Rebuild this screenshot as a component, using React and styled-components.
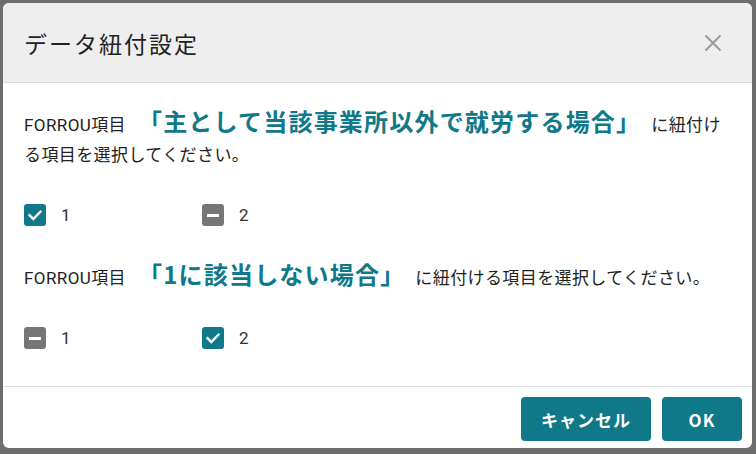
import React from 'react';
import styled, {createGlobalStyle} from "styled-components";

const GlobalStyle = createGlobalStyle`
    html, body {
        margin: 0;
        padding: 0;
        background: #6d6d6d;
        font-family: "Roboto", "Noto Sans CJK JP", sans-serif;
    }
`

const teal = '#0f7889';

const groups = [
    {title: '「主として当該事業所以外で就労する場合」', checked: [true, false]},
    {title: '「1に該当しない場合」', checked: [false, true]},
];

const CheckIcon = () => (
    <svg width="16" height="16" viewBox="0 0 16 16">
        <path d="M2.5 8.2 L6.3 12 L13.5 4.6" fill="none" stroke="#fff" strokeWidth="2.4"
              strokeLinecap="square"/>
    </svg>
);

const CloseIcon = () => (
    <svg width="18" height="18" viewBox="0 0 18 18">
        <path d="M1.5 1.5 L16.5 16.5 M16.5 1.5 L1.5 16.5" stroke="#9b9b9b" strokeWidth="2"/>
    </svg>
);

export default function App() {
    return (
        <>
            <GlobalStyle/>
            <Dialog>
                <Header>
                    <Title>データ紐付設定</Title>
                    <CloseButton><CloseIcon/></CloseButton>
                </Header>
                <Body>
                    {groups.map((g, i) => (
                        <Group key={i}>
                            <Lead>
                                FORROU項目<Highlight>{g.title}</Highlight>に紐付ける項目を選択してください。
                            </Lead>
                            <Options>
                                {g.checked.map((c, j) => (
                                    <Option key={j}>
                                        <Box $checked={c}>{c ? <CheckIcon/> : <Dash/>}</Box>
                                        <OptionLabel>{j + 1}</OptionLabel>
                                    </Option>
                                ))}
                            </Options>
                        </Group>
                    ))}
                </Body>
                <Footer>
                    <Button $w={130}>キャンセル</Button>
                    <Button $w={80}>OK</Button>
                </Footer>
            </Dialog>
        </>
    );
}

const Dialog = styled.div`
    margin: 3px 0 0 3px;
    width: 749px;
    height: 445px;
    background: #fff;
    border-radius: 6px;
    overflow: hidden;
    display: flex;
    flex-direction: column;
`

const Header = styled.div`
    height: 79px;
    flex-shrink: 0;
    background: #eeeeee;
    border-bottom: 1px solid #dcdcdc;
    display: flex;
    align-items: center;
    justify-content: space-between;
    padding: 0 30px 0 21px;
`

const Title = styled.h1`
    margin: 0;
    font-family: "Noto Sans CJK JP", sans-serif;
    font-weight: 400;
    font-size: 23px;
    letter-spacing: 2px;
    color: #222;
`

const CloseButton = styled.div`
    display: flex;
    align-items: center;
`

const Body = styled.div`
    flex: 1;
    padding: 26px 24px 0 21px;
`

const Group = styled.div`
    margin-bottom: 36px;
`

const Lead = styled.p`
    margin: 0;
    font-size: 17px;
    line-height: 30px;
    letter-spacing: 0.4px;
    color: #222;
`

const Highlight = styled.span`
    font-family: "Noto Sans CJK JP", sans-serif;
    font-weight: 700;
    font-size: 24px;
    line-height: 1;
    letter-spacing: 1.2px;
    color: ${teal};
    margin: 0 10px 0 12px;
`

const Options = styled.div`
    display: grid;
    grid-template-columns: 178px 178px;
    margin-top: 34px;
`

const Option = styled.label`
    display: flex;
    align-items: center;
    gap: 15px;
`

const Box = styled.span`
    width: 22px;
    height: 22px;
    border-radius: 3px;
    background: ${p => p.$checked ? teal : '#767676'};
    display: flex;
    align-items: center;
    justify-content: center;
`

const Dash = styled.span`
    width: 12px;
    height: 3px;
    background: #fff;
`

const OptionLabel = styled.span`
    font-size: 17px;
    color: #333;
`

const Footer = styled.div`
    flex-shrink: 0;
    border-top: 1px solid #e0e0e0;
    display: flex;
    justify-content: flex-end;
    gap: 11px;
    padding: 10px 10px 7px;
`

const Button = styled.button`
    width: ${p => p.$w}px;
    height: 44px;
    border: none;
    border-radius: 4px;
    background: ${teal};
    color: #fff;
    font-family: "Noto Sans CJK JP", sans-serif;
    font-weight: 700;
    font-size: 17px;
    letter-spacing: 1px;
`
